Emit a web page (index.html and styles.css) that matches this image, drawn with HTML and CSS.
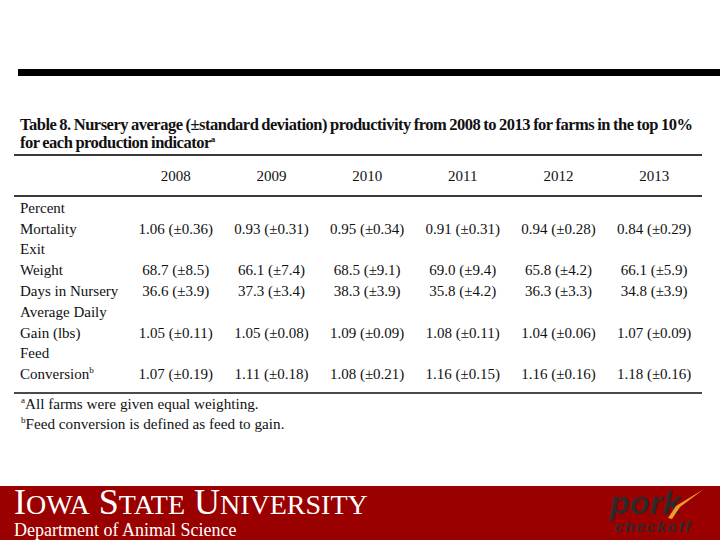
FILE: index.html
```html
<!DOCTYPE html>
<html>
<head>
<meta charset="utf-8">
<link rel="stylesheet" href="styles.css">
</head>
<body>
<div class="slide">
  <div class="topbar"></div>
  <div class="tablewrap">
    <div class="title">Table 8. Nursery average (±standard deviation) productivity from 2008 to 2013 for farms in the top 10%<br>for each production indicator<sup>a</sup></div>
    <table class="data">
      <thead>
        <tr><td class="lab"></td><td>2008</td><td>2009</td><td>2010</td><td>2011</td><td>2012</td><td>2013</td></tr>
      </thead>
      <tbody>
        <tr class="first"><td class="lab">Percent</td><td></td><td></td><td></td><td></td><td></td><td></td></tr>
        <tr><td class="lab">Mortality</td><td>1.06 (±0.36)</td><td>0.93 (±0.31)</td><td>0.95 (±0.34)</td><td>0.91 (±0.31)</td><td>0.94 (±0.28)</td><td>0.84 (±0.29)</td></tr>
        <tr><td class="lab">Exit</td><td></td><td></td><td></td><td></td><td></td><td></td></tr>
        <tr><td class="lab">Weight</td><td>68.7 (±8.5)</td><td>66.1 (±7.4)</td><td>68.5 (±9.1)</td><td>69.0 (±9.4)</td><td>65.8 (±4.2)</td><td>66.1 (±5.9)</td></tr>
        <tr><td class="lab">Days in Nursery</td><td>36.6 (±3.9)</td><td>37.3 (±3.4)</td><td>38.3 (±3.9)</td><td>35.8 (±4.2)</td><td>36.3 (±3.3)</td><td>34.8 (±3.9)</td></tr>
        <tr><td class="lab">Average Daily</td><td></td><td></td><td></td><td></td><td></td><td></td></tr>
        <tr><td class="lab">Gain (lbs)</td><td>1.05 (±0.11)</td><td>1.05 (±0.08)</td><td>1.09 (±0.09)</td><td>1.08 (±0.11)</td><td>1.04 (±0.06)</td><td>1.07 (±0.09)</td></tr>
        <tr><td class="lab">Feed</td><td></td><td></td><td></td><td></td><td></td><td></td></tr>
        <tr class="last"><td class="lab">Conversion<sup>b</sup></td><td>1.07 (±0.19)</td><td>1.11 (±0.18)</td><td>1.08 (±0.21)</td><td>1.16 (±0.15)</td><td>1.16 (±0.16)</td><td>1.18 (±0.16)</td></tr>
      </tbody>
    </table>
    <div class="notes">
      <div><sup>a</sup>All farms were given equal weighting.</div>
      <div><sup>b</sup>Feed conversion is defined as feed to gain.</div>
    </div>
  </div>
  <div class="footer">
    <div class="isu">
      <div class="isu-name"><span class="big">I</span><span class="sm">OWA</span> <span class="big">S</span><span class="sm">TATE</span> <span class="big">U</span><span class="sm">NIVERSITY</span></div>
      <div class="isu-dept">Department of Animal Science</div>
    </div>
    <div class="logo">
      <div class="pork">pork</div>
      <div class="checkoff">checkoff</div>
      <svg class="slash" width="46" height="34" viewBox="0 0 46 34"><polygon points="8,30 16,18 44,1 20,19 12,31" fill="#f39a2c"/></svg>
    </div>
  </div>
</div>
</body>
</html>
```
FILE: styles.css
```css
html, body {
  margin: 0;
  padding: 0;
  background: #fff;
}
.slide {
  width: 720px;
  height: 540px;
  display: flex;
  flex-direction: column;
  overflow: hidden;
  font-family: "Liberation Serif", "Times New Roman", serif;
  color: #111;
}
.topbar {
  margin-top: 69px;
  margin-left: 18px;
  height: 7px;
  background: #000;
}
.tablewrap {
  margin-top: 40px;
  margin-left: 14px;
  width: 688px;
}
.title {
  font-weight: bold;
  font-size: 16.5px;
  line-height: 18px;
  letter-spacing: -0.5px;
  word-spacing: -0.6px;
  padding-left: 6px;
  padding-bottom: 2px;
  border-bottom: 2px solid #3a3a3a;
  white-space: nowrap;
}
.title sup {
  font-size: 9px;
  line-height: 0;
}
.data {
  width: 688px;
  border-collapse: collapse;
  table-layout: fixed;
  font-size: 15px;
  line-height: 20.8px;
}
.data td {
  padding: 0;
  text-align: center;
  white-space: nowrap;
  width: 95.67px;
}
.data td.lab {
  width: 108px;
  text-align: left;
  padding-left: 6px;
}
.data thead td {
  padding-top: 10px;
  padding-bottom: 8px;
  border-bottom: 2px solid #3a3a3a;
}
.data tr.first td {
  padding-top: 1px;
}
.data tr.last td {
  padding-bottom: 7px;
  border-bottom: 2px solid #4a4a4a;
}
.data sup, .notes sup {
  font-size: 9px;
  line-height: 0;
}
.notes {
  font-size: 15.2px;
  line-height: 20px;
  padding-left: 7px;
  padding-top: 0px;
}
.footer {
  margin-top: auto;
  height: 54px;
  background: #9a0000;
  display: flex;
  justify-content: space-between;
  color: #fff;
}
.isu {
  padding-left: 14px;
}
.isu-name {
  font-size: 36px;
  line-height: 30px;
  margin-top: 1px;
  white-space: nowrap;
}
.isu-name .sm {
  font-size: 28px;
}
.isu-dept {
  font-size: 18px;
  line-height: 18px;
  margin-top: 1px;
}
.logo {
  position: relative;
  width: 105px;
  margin-right: 10px;
  font-family: "Liberation Sans", Arial, sans-serif;
  font-style: italic;
  font-weight: bold;
  color: #2e2a2a;
}
.pork {
  font-size: 32px;
  line-height: 22px;
  margin-top: 6px;
  padding-left: 5px;
  letter-spacing: 0.5px;
}
.checkoff {
  font-size: 15px;
  line-height: 13px;
  margin-top: 6px;
  padding-left: 10px;
  letter-spacing: 2px;
}
.slash {
  position: absolute;
  left: 55px;
  top: 2px;
}
```
